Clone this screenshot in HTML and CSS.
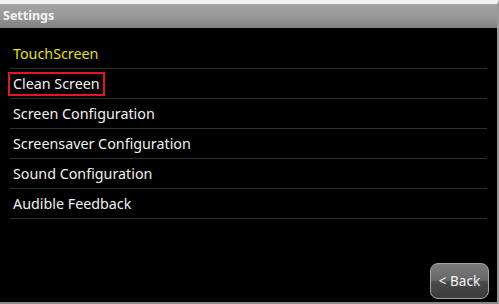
FILE: index.html
```html
<!DOCTYPE html>
<html lang="en">
  <head>
    <meta charset="UTF-8" />
    <title>Settings</title>
    <link rel="stylesheet" href="styles.css">
  </head>
  <body>
    <div class="screen">
      <div class="title-bar">Settings</div>
      <ul class="menu">
        <li class="menu-item heading">TouchScreen</li>
        <li class="menu-item"><span class="marked">Clean Screen</span></li>
        <li class="menu-item">Screen Configuration</li>
        <li class="menu-item">Screensaver Configuration</li>
        <li class="menu-item">Sound Configuration</li>
        <li class="menu-item">Audible Feedback</li>
      </ul>
      <div class="footer">
        <button class="back-btn">&lt; Back</button>
      </div>
    </div>
  </body>
</html>
```

FILE: styles.css
```css
html,
body {
  padding: 0;
  margin: 0;
  background: #000;
}
.screen {
  display: flex;
  flex-direction: column;
  width: 499px;
  height: 304px;
  box-sizing: border-box;
  border-top: 4px solid #f2f2f2;
  border-right: 2px solid #9a9a9a;
  border-bottom: 2px solid #8a8a8a;
  background: #000;
  font-family: "Noto Sans", "Open Sans", sans-serif;
}
.title-bar {
  height: 24px;
  line-height: 24px;
  padding-left: 3px;
  background: linear-gradient(#a4a4a3, #999998 50%, #7f7f7e);
  color: #f4f4f4;
  font-size: 12.5px;
  font-weight: bold;
}
.menu {
  list-style: none;
  margin: 0 10px;
  padding: 11px 0 0;
}
.menu-item {
  height: 29px;
  line-height: 29px;
  padding-left: 3px;
  border-bottom: 1px solid #2e2e2e;
  color: #f0f0f0;
  font-size: 14.3px;
  .marked {
    display: inline-block;
    margin-left: -5px;
    padding: 0 3px;
    height: 20px;
    line-height: 20px;
    border: 2px solid #e3161d;
  }
}
.heading {
  color: #e3e300;
}
.footer {
  flex: 1;
  display: flex;
  justify-content: flex-end;
  align-items: flex-end;
  padding: 0 8px 3px 0;
}
.back-btn {
  width: 59px;
  height: 36px;
  border: 1px solid #a5a5a5;
  border-radius: 8px;
  background: linear-gradient(#7c7c7c, #666 48%, #4a4a4a 52%, #3c3c3c);
  color: #f4f4f4;
  font-family: "Noto Sans", "Open Sans", sans-serif;
  font-size: 13.5px;
  padding: 0;
}
```
